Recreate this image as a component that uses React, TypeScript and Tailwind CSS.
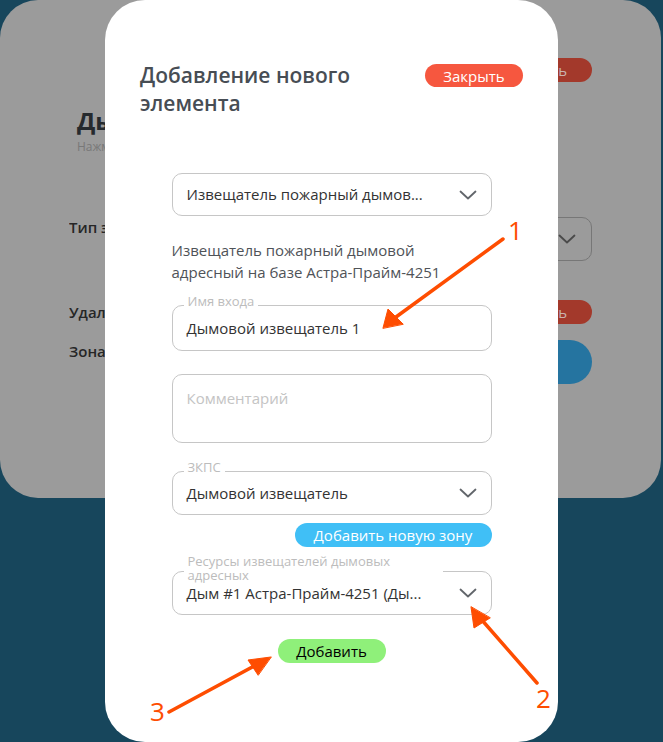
import React from "react";

const Chevron = ({ className = "" }: { className?: string }) => (
  <svg width="18" height="10" viewBox="0 0 18 10" className={className} fill="none">
    <path d="M1.5 1.5 L9 8.5 L16.5 1.5" stroke="currentColor" strokeWidth="1.8" strokeLinecap="round" strokeLinejoin="round" />
  </svg>
);

function Background() {
  return (
    <div className="h-[498px] w-[661px] rounded-[38px] bg-[#9b9b9b] px-[69px] pt-[58px]">
      <div className="flex justify-end">
        <div className="flex h-[24px] w-[110px] items-center justify-center rounded-full bg-[#a3392b] text-[15px] text-[#c9b3ae]">Удалить</div>
      </div>
      <div className="mt-[24px] w-[36px] overflow-hidden whitespace-nowrap pl-[8px]">
        <div className="text-[24px] font-bold leading-[30px] text-[#262a2e]">Дымовой</div>
        <div className="mt-[3px] text-[12px] leading-[16px] text-[#787878]">Нажмите</div>
      </div>
      <div className="mt-[62px] flex items-start justify-between">
        <div className="w-[36px] overflow-hidden whitespace-nowrap text-[15px] font-semibold leading-[20px] text-[#262626]">Тип элемента</div>
        <div className="flex h-[44px] w-[220px] items-center justify-end rounded-[10px] border border-[#777] pr-[15px] text-[#4a4a4a]">
          <Chevron />
        </div>
      </div>
      <div className="mt-[39px] flex items-center justify-between">
        <div className="w-[36px] overflow-hidden whitespace-nowrap text-[15px] font-semibold leading-[20px] text-[#262626]">Удаление</div>
        <div className="flex h-[24px] w-[110px] items-center justify-center rounded-full bg-[#a3392b] text-[15px] text-[#c9b3ae]">Удалить</div>
      </div>
      <div className="mt-[16px] flex items-start justify-between">
        <div className="w-[36px] overflow-hidden whitespace-nowrap pt-[1px] text-[15px] font-semibold leading-[20px] text-[#262626]">Зона</div>
        <div className="h-[44px] w-[200px] rounded-full bg-[#2574a0]" />
      </div>
    </div>
  );
}

export default function App() {
  return (
    <div
      className="relative h-[742px] w-[663px] overflow-hidden bg-[#17465c]"
      style={{ fontFamily: '"Open Sans", "Noto Sans", sans-serif' }}
    >
      <Background />

      <div className="absolute left-[105px] top-0 flex h-[742px] w-[453px] flex-col rounded-[40px] bg-white">
        <div className="flex items-start justify-between px-[35px] pt-[61px]">
          <div className="text-[21px] font-semibold leading-[28px] text-[#474d54]">
            Добавление нового
            <br />
            элемента
          </div>
          <button className="mt-[3px] flex h-[23px] w-[98px] items-center justify-center rounded-full bg-[#f6573f] text-[15px] leading-[20px] text-white">
            Закрыть
          </button>
        </div>

        <div className="mx-auto mt-[56px] flex w-[320px] flex-col">
          <div className="flex h-[43px] items-center justify-between rounded-[10px] border border-[#c6c6c6] pl-[14px] pr-[14px] text-[15px] text-[#333]">
            <span>Извещатель пожарный дымов...</span>
            <Chevron className="text-[#62666b]" />
          </div>

          <div className="mt-[23px] text-[15px] leading-[22px] text-[#4f5358]">
            Извещатель пожарный дымовой
            <br />
            адресный на базе Астра-Прайм-4251
          </div>

          <div className="relative mt-[22px] flex h-[46px] items-center rounded-[10px] border border-[#c6c6c6] pl-[14px] text-[15px] text-[#333]">
            <span className="absolute left-[11px] top-[-12px] bg-white px-[4px] text-[13px] leading-[14px] text-[#bcbcbc]">Имя входа</span>
            Дымовой извещатель 1
          </div>

          <div className="mt-[23px] h-[69px] rounded-[10px] border border-[#c6c6c6] pl-[14px] pt-[12px] text-[15px] leading-[22px] text-[#c4c4c4]">
            Комментарий
          </div>

          <div className="relative mt-[28px] flex h-[44px] items-center justify-between rounded-[10px] border border-[#c6c6c6] pl-[14px] pr-[14px] text-[15px] text-[#333]">
            <span className="absolute left-[11px] top-[-12px] bg-white px-[4px] text-[13px] leading-[14px] text-[#bcbcbc]">ЗКПС</span>
            <span>Дымовой извещатель</span>
            <Chevron className="text-[#62666b]" />
          </div>

          <div className="mt-[8px] flex justify-end">
            <button className="flex h-[24px] w-[197px] items-center justify-center rounded-full bg-[#40bff6] text-[15px] leading-[20px] text-white">
              Добавить новую зону
            </button>
          </div>

          <div className="relative mt-[24px] flex h-[44px] items-center justify-between rounded-[10px] border border-[#c6c6c6] pl-[14px] pr-[14px] text-[15px] text-[#333]">
            <span className="absolute left-[11px] top-[-18px] w-[259px] bg-white px-[4px] text-[13px] leading-[14px] text-[#bcbcbc]">
              Ресурсы извещателей дымовых адресных
            </span>
            <span>Дым #1 Астра-Прайм-4251 (Ды...</span>
            <Chevron className="text-[#62666b]" />
          </div>

          <div className="mt-[24px] flex justify-center">
            <button className="flex h-[24px] w-[108px] items-center justify-center rounded-full bg-[#8ff07a] text-[15px] leading-[20px] text-black">
              Добавить
            </button>
          </div>
        </div>
      </div>

      {/* annotations */}
      <svg className="pointer-events-none absolute left-0 top-0" width="663" height="742" viewBox="0 0 663 742">
        <g stroke="#fe4d01" strokeWidth="3.5" strokeLinecap="round" fill="#fe4d01">
          <line x1="503" y1="239" x2="396" y2="317" />
          <polygon points="383,328 388,309 403,324" strokeWidth="1" strokeLinejoin="round" />
          <line x1="537" y1="683" x2="481" y2="619" />
          <polygon points="471,607 474,628 490,618" strokeWidth="1" strokeLinejoin="round" />
          <line x1="169" y1="712" x2="258" y2="664" />
          <polygon points="271,657 248,660 258,675" strokeWidth="1" strokeLinejoin="round" />
        </g>
      </svg>
      <span className="absolute left-[508px] top-[214px] text-[26px] leading-[32px] text-[#fe4d01]">1</span>
      <span className="absolute left-[536px] top-[682px] text-[26px] leading-[32px] text-[#fe4d01]">2</span>
      <span className="absolute left-[150px] top-[695px] text-[26px] leading-[32px] text-[#fe4d01]">3</span>
    </div>
  );
}
